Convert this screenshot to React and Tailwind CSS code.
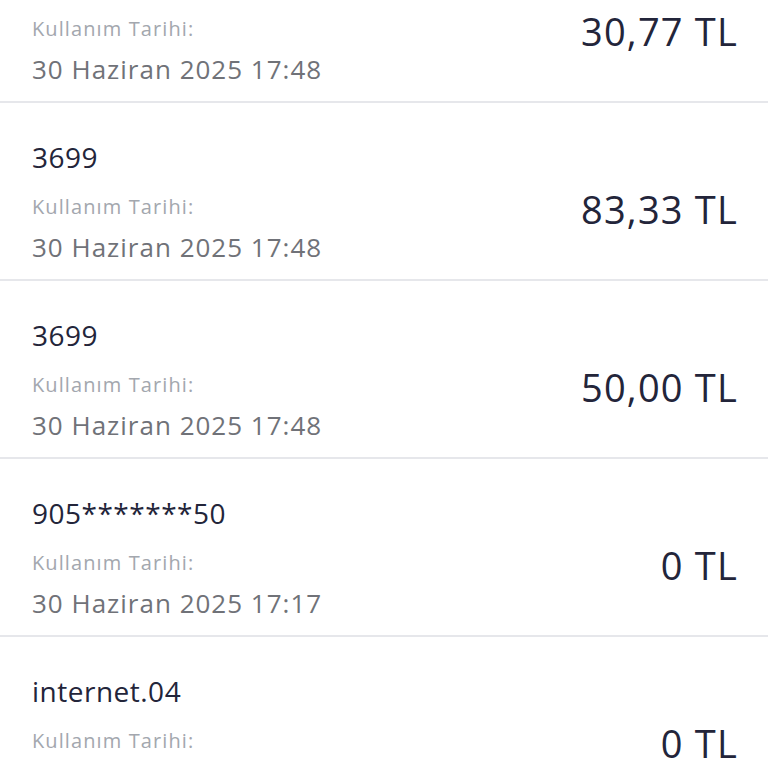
const rows = [
  { title: "3699", date: "30 Haziran 2025 17:48", amount: "30,77 TL" },
  { title: "3699", date: "30 Haziran 2025 17:48", amount: "83,33 TL" },
  { title: "3699", date: "30 Haziran 2025 17:48", amount: "50,00 TL" },
  { title: "905*******50", date: "30 Haziran 2025 17:17", amount: "0 TL" },
  { title: "internet.04", date: "30 Haziran 2025 17:05", amount: "0 TL" },
];

function UsageRow({ title, date, amount }) {
  return (
    <div className="flex h-[178px] shrink-0 justify-between border-b-2 border-[#e6e7eb] px-8 pt-[34px] pb-[13px]">
      <div className="flex flex-col">
        <span className="text-[28px] leading-[40px] tracking-[0.5px] text-[#23253a]">{title}</span>
        <span className="mt-[15px] text-[20px] leading-[30px] tracking-[1.1px] text-[#a3a7ae]">Kullanım Tarihi:</span>
        <span className="mt-[5px] text-[26px] leading-[40px] tracking-[1px] text-[#707278]">{date}</span>
      </div>
      <div className="-mr-[2px] mt-[14px] self-center text-[38px] leading-[48px] tracking-[1.2px] text-[#23253a]">
        {amount}
      </div>
    </div>
  );
}

export default function App() {
  return (
    <div className="h-[768px] w-[768px] overflow-hidden bg-white font-['Open_Sans',sans-serif]">
      <div className="-mt-[75px] flex flex-col">
        {rows.map((row, i) => (
          <UsageRow key={i} {...row} />
        ))}
      </div>
    </div>
  );
}
